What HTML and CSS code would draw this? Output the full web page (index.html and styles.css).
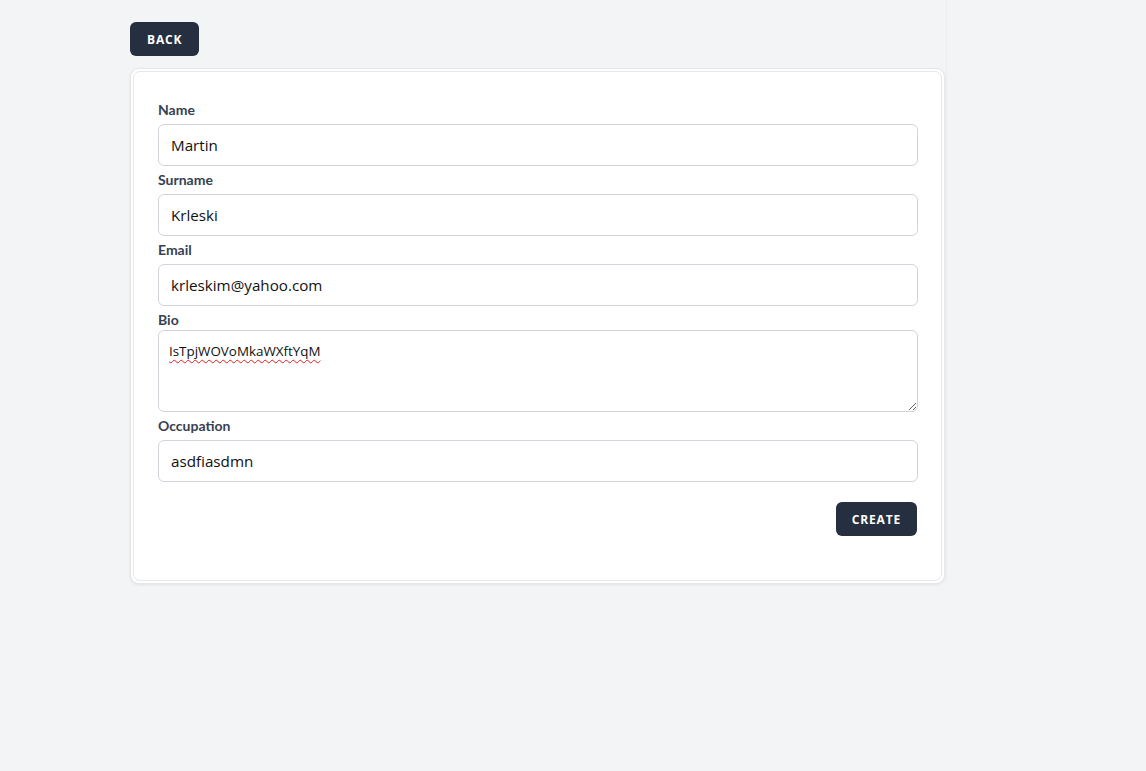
FILE: index.html
```html
<!DOCTYPE html>
<html>
<head>
<meta charset="utf-8">
<link rel="stylesheet" href="styles.css">
</head>
<body>
<div class="page">
  <div class="wrap">
    <div class="top">
      <button class="btn">Back</button>
    </div>
    <div class="card">
      <div class="card-inner">
        <form class="form">
          <label class="label">Name</label>
          <input class="input" type="text" value="Martin">
          <label class="label">Surname</label>
          <input class="input" type="text" value="Krleski">
          <label class="label">Email</label>
          <input class="input" type="text" value="krleskim@yahoo.com">
          <label class="label label-tight">Bio</label>
          <textarea class="textarea">IsTpjWOVoMkaWXftYqM</textarea>
          <label class="label">Occupation</label>
          <input class="input" type="text" value="asdfiasdmn">
          <div class="actions">
            <button class="btn btn-create" type="button">Create</button>
          </div>
        </form>
      </div>
    </div>
  </div>
</div>
</body>
</html>
```
FILE: styles.css
```css
* { box-sizing: border-box; }
html, body { margin: 0; padding: 0; }
body {
  background: #f3f4f6;
  font-family: "Open Sans", "Noto Sans", sans-serif;
  width: 1146px;
  height: 771px;
  overflow: hidden;
}
.page {
  padding-left: 130px;
}
.wrap {
  width: 816px;
  background: #f3f4f6;
  box-shadow: 1px 0 0 #eceef1;
  padding-top: 22px;
}
.top {
  display: flex;
  height: 46px;
  align-items: flex-start;
}
.btn {
  background: #252f3f;
  color: #fff;
  border: none;
  border-radius: 6px;
  height: 34px;
  padding: 0 17px;
  font-family: "Open Sans", sans-serif;
  font-weight: 700;
  font-size: 12px;
  letter-spacing: 0.07em;
  text-transform: uppercase;
}
.btn-create {
  padding: 0 16px;
}
.card {
  width: 815px;
  background: #fff;
  border: 1px solid #e5e7eb;
  border-radius: 9px;
  padding: 2px;
  box-shadow: 0 1px 3px rgba(0,0,0,0.08);
}
.card-inner {
  border: 1px solid #e5e7eb;
  border-radius: 7px;
  height: 510px;
  padding: 28px 24px 0 24px;
}
.form {
  display: flex;
  flex-direction: column;
}
.label {
  font-family: "Lato", sans-serif;
  font-weight: 700;
  font-size: 14px;
  color: #374151;
  line-height: 20px;
  margin-bottom: 4px;
}
.label-tight {
  margin-bottom: 0;
}
.input, .textarea {
  width: 760px;
  border: 1px solid #d1d5db;
  border-radius: 6px;
  background: #fff;
  color: #111;
  font-family: "Open Sans", "Noto Sans", sans-serif;
  margin: 0 0 4px 0;
  outline: none;
}
.input {
  height: 42px;
  padding: 0 12px;
  font-size: 15.2px;
}
.textarea {
  height: 82px;
  padding: 11px 10px;
  font-size: 13.4px;
  line-height: 18px;
  resize: vertical;
  text-decoration: underline wavy #e11d1d;
  text-decoration-thickness: 1px;
  text-underline-offset: 3px;
}
.actions {
  display: flex;
  justify-content: flex-end;
  margin-top: 16px;
}
```
